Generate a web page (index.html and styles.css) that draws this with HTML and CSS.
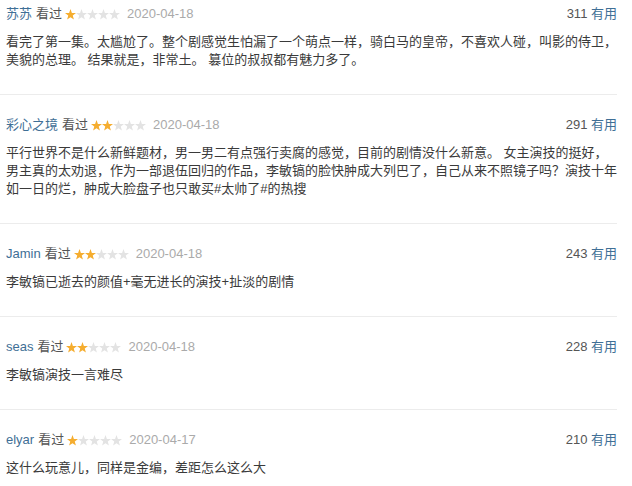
FILE: index.html
```html
<!DOCTYPE html>
<html lang="zh-CN">
<head>
    <meta charset="UTF-8">
    <meta name="viewport" content="width=device-width, initial-scale=1.0">
    <title>短评</title>
    <link rel="stylesheet" href="styles.css">
</head>
<body>
    <svg class="sprite" xmlns="http://www.w3.org/2000/svg">
        <symbol id="star" viewBox="0 0 11 11">
            <polygon points="5.5,0 6.9,3.9 11,4 7.75,6.5 8.9,10.6 5.5,8.2 2.1,10.6 3.25,6.5 0,4 4.1,3.9"/>
        </symbol>
    </svg>

    <div class="comments">
        <div class="comment">
            <div class="comment-info">
                <a class="user" href="#">苏苏</a>
                <span class="watched">看过</span>
                <span class="stars">
                    <svg class="on"><use href="#star"/></svg><svg><use href="#star"/></svg><svg><use href="#star"/></svg><svg><use href="#star"/></svg><svg><use href="#star"/></svg>
                </span>
                <span class="date">2020-04-18</span>
                <span class="votes">311 <a href="#">有用</a></span>
            </div>
            <p class="comment-text">看完了第一集。太尴尬了。整个剧感觉生怕漏了一个萌点一样，骑白马的皇帝，不喜欢人碰，叫影的侍卫，美貌的总理。 结果就是，非常土。 篡位的叔叔都有魅力多了。</p>
        </div>

        <div class="comment">
            <div class="comment-info">
                <a class="user" href="#">彩心之境</a>
                <span class="watched">看过</span>
                <span class="stars">
                    <svg class="on"><use href="#star"/></svg><svg class="on"><use href="#star"/></svg><svg><use href="#star"/></svg><svg><use href="#star"/></svg><svg><use href="#star"/></svg>
                </span>
                <span class="date">2020-04-18</span>
                <span class="votes">291 <a href="#">有用</a></span>
            </div>
            <p class="comment-text">平行世界不是什么新鲜题材，男一男二有点强行卖腐的感觉，目前的剧情没什么新意。 女主演技的挺好，男主真的太劝退，作为一部退伍回归的作品，李敏镐的脸快肿成大列巴了，自己从来不照镜子吗？演技十年如一日的烂，肿成大脸盘子也只敢买#太帅了#的热搜</p>
        </div>

        <div class="comment">
            <div class="comment-info">
                <a class="user" href="#">Jamin</a>
                <span class="watched">看过</span>
                <span class="stars">
                    <svg class="on"><use href="#star"/></svg><svg class="on"><use href="#star"/></svg><svg><use href="#star"/></svg><svg><use href="#star"/></svg><svg><use href="#star"/></svg>
                </span>
                <span class="date">2020-04-18</span>
                <span class="votes">243 <a href="#">有用</a></span>
            </div>
            <p class="comment-text">李敏镐已逝去的颜值+毫无进长的演技+扯淡的剧情</p>
        </div>

        <div class="comment">
            <div class="comment-info">
                <a class="user" href="#">seas</a>
                <span class="watched">看过</span>
                <span class="stars">
                    <svg class="on"><use href="#star"/></svg><svg class="on"><use href="#star"/></svg><svg><use href="#star"/></svg><svg><use href="#star"/></svg><svg><use href="#star"/></svg>
                </span>
                <span class="date">2020-04-18</span>
                <span class="votes">228 <a href="#">有用</a></span>
            </div>
            <p class="comment-text">李敏镐演技一言难尽</p>
        </div>

        <div class="comment">
            <div class="comment-info">
                <a class="user" href="#">elyar</a>
                <span class="watched">看过</span>
                <span class="stars">
                    <svg class="on"><use href="#star"/></svg><svg><use href="#star"/></svg><svg><use href="#star"/></svg><svg><use href="#star"/></svg><svg><use href="#star"/></svg>
                </span>
                <span class="date">2020-04-17</span>
                <span class="votes">210 <a href="#">有用</a></span>
            </div>
            <p class="comment-text">这什么玩意儿，同样是金编，差距怎么这么大</p>
        </div>
    </div>
</body>
</html>
```

FILE: styles.css
```css
body {
    margin: 0;
    background: #fff;
    font-family: "Liberation Sans", "Noto Sans CJK SC", sans-serif;
    font-size: 13px;
    color: #333;
}

a {
    text-decoration: none;
}

.sprite {
    display: none;
}

.comments {
    width: 617px;
}

.comment {
    padding: 20px 0 25px 6px;
    border-bottom: 1px solid #ececec;
}

.comment:first-child {
    padding-top: 4px;
}

.comment:last-child {
    border-bottom: none;
}

.comment-info {
    display: flex;
    align-items: center;
    height: 20px;
    line-height: 20px;
}

.user {
    color: #3f6f96;
}

.watched {
    color: #555;
    margin-left: 4px;
}

.stars {
    display: flex;
    margin-left: 3px;
}

.stars svg {
    width: 11px;
    height: 11px;
    fill: #e3e3e3;
}

.stars svg.on {
    fill: #f5ad2f;
}

.date {
    color: #aaa;
    margin-left: 7px;
}

.votes {
    margin-left: auto;
    color: #555;
}

.votes a {
    color: #3f6f96;
}

.comment-text {
    margin: 9px 0 0;
    line-height: 18px;
    color: #3a3a3a;
}
```
